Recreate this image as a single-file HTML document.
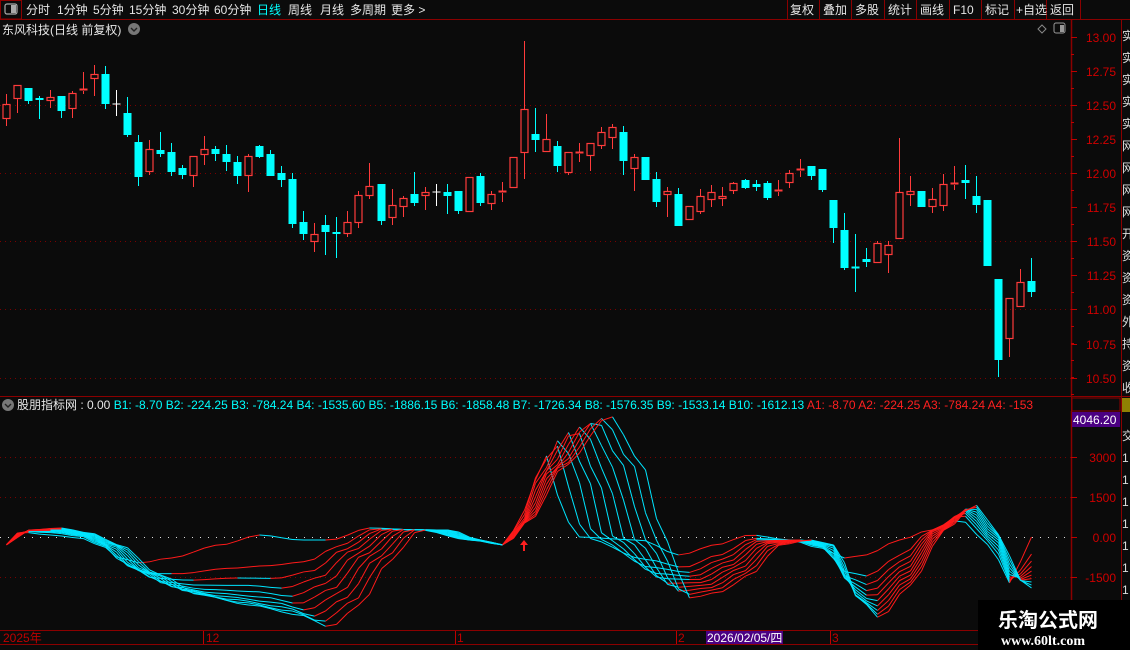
<!DOCTYPE html>
<html><head><meta charset="utf-8">
<style>
html,body{margin:0;padding:0;background:#0b0b0b;width:1130px;height:650px;overflow:hidden}
body{font-family:"Liberation Sans","Noto Sans CJK SC",sans-serif;color:#ddd;position:relative}
</style></head><body>
<svg id="s" width="1130" height="650" style="position:absolute;left:0;top:0" xmlns="http://www.w3.org/2000/svg" font-family="Liberation Sans, Noto Sans CJK SC, sans-serif">
<rect x="0" y="0" width="1130" height="19" fill="#0b0b0b"/>
<line x1="0" y1="19.5" x2="1130" y2="19.5" stroke="#8b0000"/>
<rect x="0.5" y="0.5" width="21" height="18.5" fill="none" stroke="#8b0000"/>
<rect x="5" y="4" width="12" height="10" rx="2" fill="none" stroke="#aaa" stroke-width="1.2"/>
<rect x="11" y="5" width="5" height="8" fill="#aaa"/>
<g font-size="12" fill="#e6e6e6">
<text x="26" y="14">分时</text><text x="57" y="14">1分钟</text><text x="93" y="14">5分钟</text>
<text x="129" y="14">15分钟</text><text x="172" y="14">30分钟</text><text x="214" y="14">60分钟</text>
<text x="257" y="14" fill="#00ffff">日线</text><text x="288" y="14">周线</text><text x="320" y="14">月线</text>
<text x="350" y="14">多周期</text><text x="391" y="14">更多 &gt;</text>
</g>
<g stroke="#8b0000"><line x1="787.5" y1="0" x2="787.5" y2="19"/><line x1="819.5" y1="0" x2="819.5" y2="19"/><line x1="851.5" y1="0" x2="851.5" y2="19"/><line x1="884.5" y1="0" x2="884.5" y2="19"/><line x1="916.5" y1="0" x2="916.5" y2="19"/><line x1="949.5" y1="0" x2="949.5" y2="19"/><line x1="981.5" y1="0" x2="981.5" y2="19"/><line x1="1014.5" y1="0" x2="1014.5" y2="19"/><line x1="1046.5" y1="0" x2="1046.5" y2="19"/><line x1="1080.5" y1="0" x2="1080.5" y2="19"/></g>
<g font-size="12" fill="#e6e6e6">
<text x="790" y="14">复权</text><text x="823" y="14">叠加</text><text x="855" y="14">多股</text><text x="888" y="14">统计</text><text x="920" y="14">画线</text><text x="953" y="14">F10</text><text x="985" y="14">标记</text><text x="1016" y="14">+自选</text><text x="1050" y="14">返回</text>
</g>
<text x="2" y="34" font-size="12" fill="#e6e6e6">东风科技(日线 前复权)</text>
<circle cx="134" cy="29" r="6" fill="#777"/><path d="M131 28 l3 3 l3 -3" fill="none" stroke="#222" stroke-width="1.4"/>
<path d="M1042 25 l4 4 l-4 4 l-4 -4z" fill="none" stroke="#888"/>
<rect x="1054" y="23" width="11" height="10" rx="2" fill="none" stroke="#999"/><rect x="1060" y="25" width="4" height="7" fill="#999"/>
<line x1="1071.5" y1="19" x2="1071.5" y2="650" stroke="#8b0000" stroke-width="1.5"/>
<line x1="1121.5" y1="19" x2="1121.5" y2="650" stroke="#8b0000"/>
<line x1="0" y1="396.5" x2="1130" y2="396.5" stroke="#8b0000"/>
<line x1="0" y1="630.5" x2="1071" y2="630.5" stroke="#8b0000"/>
<line x1="0" y1="644.5" x2="1071" y2="644.5" stroke="#8b0000"/>
<g id="grid" stroke="#7a0000" stroke-dasharray="1,4"></g>
<g id="axis" font-size="12" fill="#d00000" text-anchor="end"></g>
<g id="ind"></g>
<g id="cdl"></g>
<circle cx="8" cy="405" r="6" fill="#777"/><path d="M5 404 l3 3 l3 -3" fill="none" stroke="#222" stroke-width="1.4"/>
<text y="409" font-size="12"><tspan x="17" fill="#e6e6e6">股朋指标网 : 0.00 </tspan><tspan fill="#00ffff">B1: -8.70  B2: -224.25  B3: -784.24  B4: -1535.60  B5: -1886.15  B6: -1858.48  B7: -1726.34  B8: -1576.35  B9: -1533.14  B10: -1612.13 </tspan><tspan fill="#ff2020">A1: -8.70  A2: -224.25  A3: -784.24  A4: -153</tspan></text>
<rect x="1065" y="397" width="6" height="14" fill="#0b0b0b"/>
<rect x="1072" y="398" width="48" height="13" fill="#0b0b0b" stroke="#8b0000"/>
<rect x="1072" y="412" width="48" height="15" fill="#4b0082"/>
<text x="1073" y="424" font-size="12" fill="#fff">4046.20</text>
<path d="M524 540 l-4 5 h3 v6 h2 v-6 h3z" fill="#ff2020"/>
<g font-size="12" fill="#c00000"><text x="3" y="642">2025年</text><text x="206" y="642">12</text><text x="457" y="642">1</text><text x="678" y="642">2</text><text x="832" y="642">3</text></g>
<g stroke="#c00000"><line x1="203.5" y1="631" x2="203.5" y2="644"/><line x1="455.5" y1="631" x2="455.5" y2="644"/><line x1="676.5" y1="631" x2="676.5" y2="644"/><line x1="830.5" y1="631" x2="830.5" y2="644"/></g>
<rect x="706" y="631" width="77" height="13" fill="#4b0082"/>
<text x="707" y="642" font-size="12" fill="#fff">2026/02/05/四</text>
<g font-size="12" fill="#ddd"><text x="1122" y="40">实</text><text x="1122" y="62">实</text><text x="1122" y="84">实</text><text x="1122" y="106">实</text><text x="1122" y="128">实</text><text x="1122" y="150">网</text><text x="1122" y="172">网</text><text x="1122" y="194">网</text><text x="1122" y="216">网</text><text x="1122" y="238">开</text><text x="1122" y="260">资</text><text x="1122" y="282">资</text><text x="1122" y="304">资</text><text x="1122" y="326">外</text><text x="1122" y="348">持</text><text x="1122" y="370">资</text><text x="1122" y="392">收</text>
<text x="1122" y="440">交</text><text x="1122" y="462">1</text><text x="1122" y="484">1</text><text x="1122" y="506">1</text><text x="1122" y="528">1</text><text x="1122" y="550">1</text><text x="1122" y="572">1</text><text x="1122" y="594">1</text></g>
<rect x="1122" y="398" width="8" height="14" fill="#c8b400" opacity="0.7"/>
<rect x="978" y="600" width="152" height="50" fill="#000"/>
<text x="998" y="627" font-size="20" font-weight="bold" fill="#fff" font-family="Noto Sans CJK SC, sans-serif">乐淘公式网</text>
<text x="1001" y="645" font-size="14" font-weight="bold" fill="#fff" font-family="Liberation Serif, serif">www.60lt.com</text>
</svg>
<script>
var NS="http://www.w3.org/2000/svg";
function el(p,t,a){var e=document.createElementNS(NS,t);for(var k in a)e.setAttribute(k,a[k]);p.appendChild(e);return e;}
var grid=document.getElementById('grid'),axis=document.getElementById('axis'),cdl=document.getElementById('cdl'),ind=document.getElementById('ind');
[105,173,241,309,378,457,497,577].forEach(function(y){el(grid,'line',{x1:0,y1:y+.5,x2:1071,y2:y+.5});});
el(grid,'line',{x1:0,y1:537.5,x2:1071,y2:537.5,stroke:'#ddd','stroke-dasharray':'1,7'});
var pl=[["13.00",37],["12.75",71],["12.50",105],["12.25",139],["12.00",173],["11.75",207],["11.50",241],["11.25",275],["11.00",309],["10.75",344],["10.50",378]];
pl.forEach(function(p){var t=el(axis,'text',{x:1116,y:p[1]+5});t.textContent=p[0];el(axis,'line',{x1:1071,y1:p[1]+.5,x2:1077,y2:p[1]+.5,stroke:'#c00000'});});
for(var y=54;y<395;y+=17)el(axis,'line',{x1:1071,y1:y+.5,x2:1074,y2:y+.5,stroke:'#c00000'});
[["3000",457],["1500",497],["0.00",537],["-1500",577]].forEach(function(p){var t=el(axis,'text',{x:1116,y:p[1]+5});t.textContent=p[0];el(axis,'line',{x1:1071,y1:p[1]+.5,x2:1077,y2:p[1]+.5,stroke:'#c00000'});});
var C=[[104,119,94,126,'r'],[85,99,85,113,'r'],[88,101,88,104,'c'],[98,100,96,119,'c'],[97,101,90,108,'r'],[96,111,96,118,'c'],[93,109,91,118,'r'],[89,91,72,94,'r'],[74,79,65,96,'r'],[74,104,66,109,'c'],[103.5,104.5,90,116,'w'],[113,135,97,137,'c'],[142,177,135,186,'c'],[149,172,140,175,'r'],[150,154,132,157,'c'],[152,172,143,176,'c'],[168,175,165,179,'c'],[156,176,156,187,'r'],[149,155,136,165,'r'],[149,154,146,161,'c'],[154,162,145,171,'c'],[162,176,156,184,'c'],[156,176,154,192,'r'],[146,157,145,158,'c'],[154,176,150,176,'c'],[173,180,166,187,'c'],[179,224,173,228,'c'],[222,234,211,240,'c'],[234,242,223,252,'r'],[225,232,215,255,'c'],[232,234,217,258,'c'],[222,234,211,237,'r'],[195,223,191,228,'r'],[186,196,163,199,'r'],[184,221,184,225,'c'],[205,218,189,225,'r'],[198,207,196,217,'r'],[194,203,172,206,'c'],[192,196,187,210,'r'],[191.5,192.5,184,206,'w'],[192,196,184,214,'c'],[191,211,191,214,'c'],[177,212,177,212,'r'],[176,203,173,206,'c'],[194,204,191,210,'r'],[191,193,182,202,'r'],[157,188,157,188,'r'],
[109,153,41,179,'r'],[134,140,108,152,'c'],[139,152,114,152,'r'],[146,166,141,172,'c'],[152,173,152,175,'r'],[152,154,143,162,'r'],[143,156,143,171,'r'],[132,146,127,149,'r'],[127,138,124,149,'r'],[132,161,126,175,'c'],[157,169,154,191,'r'],[157,180,157,180,'c'],[179,202,172,207,'c'],[191,195,187,217,'r'],[194,226,188,226,'c'],[206,220,206,220,'r'],[196,212,189,214,'r'],[192,200,185,207,'r'],[196,199,187,206,'r'],[183,191,182,194,'r'],[180,188,179,189,'c'],[184,187,180,191,'c'],[183,198,181,200,'c'],[190,192,180,196,'r'],[173,183,170,188,'r'],[169,171,159,177,'r'],[166,176,166,180,'c'],[169,190,169,192,'c'],[200,228,200,243,'c'],[230,268,213,270,'c'],[266.5,267.5,234,292,'c'],[259,262,248,267,'c'],[243,263,241,263,'r'],[245,255,241,273,'r'],[192,239,138,239,'r'],[191,195,176,206,'r'],[191,207,191,207,'c'],[199,207,188,213,'r'],[184,206,174,211,'r'],[183,185,166,190,'r'],[180,183,165,199,'c'],[196,205,176,213,'c'],[200,266,200,266,'c'],[279,360,279,377,'c'],[298,339,298,357,'r'],[282,307,269,307,'r'],[281,292,258,297,'c']];
var X=[];
C.forEach(function(c,i){var x=Math.round(5.5+i*11.03)+.5;X.push(x);
 var col=c[4]=='r'?'#ff3b3b':(c[4]=='c'?'#00ffff':'#ffffff');
 el(cdl,'line',{x1:x,y1:c[2],x2:x,y2:c[0],stroke:col});
 el(cdl,'line',{x1:x,y1:c[1],x2:x,y2:c[3],stroke:col});
 var h=Math.max(c[1]-c[0],1);
 if(c[4]=='r'){ if(h<=2) el(cdl,'rect',{x:x-4,y:c[0]-0.5,width:8,height:2,fill:col}); else el(cdl,'rect',{x:x-3.5,y:c[0]+.5,width:7,height:h-1,fill:'none',stroke:col,'stroke-width':1.2});}
 else if(c[4]=='c'){el(cdl,'rect',{x:x-4,y:c[0],width:8,height:Math.max(h,2),fill:col});}
 else el(cdl,'line',{x1:x-4,y1:c[0]+.5,x2:x+4,y2:c[0]+.5,stroke:col});
});
var S=[[-200,540],[5,545],[30,530],[60,528],[90,533],[120,545],[160,575],[200,595],[250,605],[300,615],[330,627],[360,605],[390,560],[420,530],[450,530],[480,540],[505,545],[530,520],[565,465],[610,416],[640,460],[665,540],[690,598],[720,592],[750,575],[780,545],[810,540],[835,545],[860,600],[880,618],[910,585],[945,530],[975,505],[1000,535],[1020,580],[1032,588],[1300,588]];
var F=[[-200,540],[5,545],[20,532],[50,535],[80,538],[100,545],[120,558],[140,563],[170,558],[220,545],[260,535],[300,540],[330,540],[370,528],[420,530],[470,540],[505,545],[518,525],[535,480],[548,455],[560,500],[575,537],[640,540],[680,555],[715,545],[750,535],[790,540],[820,548],[845,558],[865,555],[900,540],[930,530],[960,520],[990,545],[1010,583],[1032,537],[1300,537]];
function ev(K,x){for(var i=1;i<K.length;i++){if(x<=K[i][0]){var a=K[i-1],b=K[i],t=(x-a[0])/(b[0]-a[0]);t=t*t*(3-2*t);return a[1]+(b[1]-a[1])*t;}}return K[K.length-1][1];}
for(var n=1;n<=10;n++){
 var t=(n-1)/9,ty=Math.pow(t,0.5),K=[];
 for(var j=0;j<S.length;j++)K.push([F[j][0]+(S[j][0]-F[j][0])*t,F[j][1]+(S[j][1]-F[j][1])*ty]);
 var pts=[];
 for(var i=0;i<X.length;i++){var y=ev(K,X[i]);pts.push(Math.max(414,Math.min(628,y)));}
 for(var i=1;i<X.length;i++){
  el(ind,'line',{x1:X[i-1],y1:pts[i-1],x2:X[i],y2:pts[i],stroke:pts[i]<pts[i-1]?'#ff1a1a':'#00e5ff','stroke-width':1});
 }
}
</script>
</body></html>
